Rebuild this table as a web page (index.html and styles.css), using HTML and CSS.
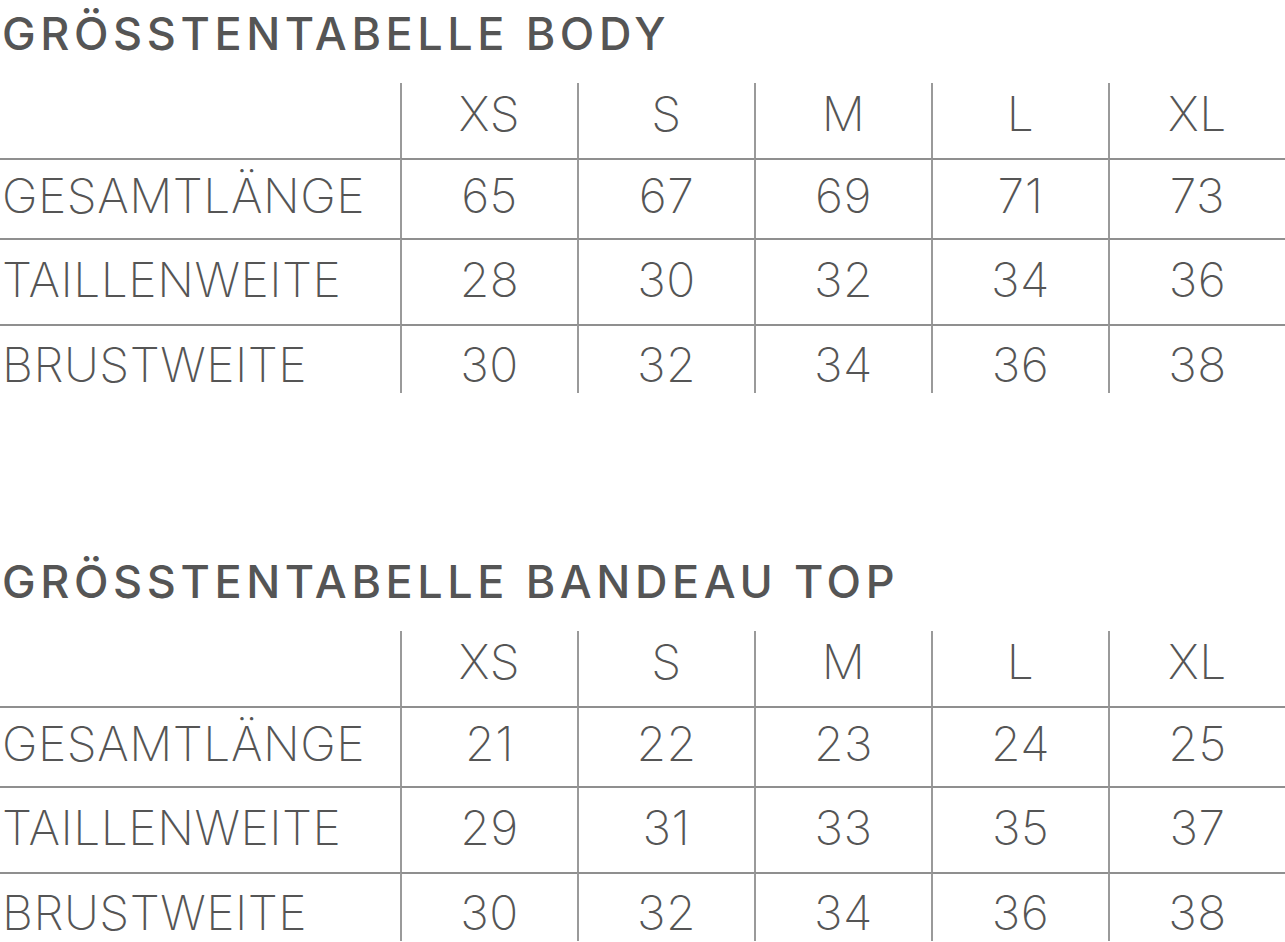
FILE: index.html
```html
<!DOCTYPE html>
<html lang="de">
<head>
<meta charset="utf-8">
<title>Größentabelle</title>
<link rel="stylesheet" href="styles.css">
</head>
<body>
<main class="page">
  <section class="block">
    <h2 class="title">GRÖSSTENTABELLE BODY</h2>
    <div class="sizes">
      <div class="cell head label"></div>
      <div class="cell head val">XS</div>
      <div class="cell head val">S</div>
      <div class="cell head val">M</div>
      <div class="cell head val">L</div>
      <div class="cell head val">XL</div>

      <div class="cell r1 label">GESAMTLÄNGE</div>
      <div class="cell r1 val">65</div>
      <div class="cell r1 val">67</div>
      <div class="cell r1 val">69</div>
      <div class="cell r1 val">71</div>
      <div class="cell r1 val">73</div>

      <div class="cell r2 label">TAILLENWEITE</div>
      <div class="cell r2 val">28</div>
      <div class="cell r2 val">30</div>
      <div class="cell r2 val">32</div>
      <div class="cell r2 val">34</div>
      <div class="cell r2 val">36</div>

      <div class="cell r3 label">BRUSTWEITE</div>
      <div class="cell r3 val">30</div>
      <div class="cell r3 val">32</div>
      <div class="cell r3 val">34</div>
      <div class="cell r3 val">36</div>
      <div class="cell r3 val">38</div>
    </div>
  </section>

  <section class="block second">
    <h2 class="title">GRÖSSTENTABELLE BANDEAU TOP</h2>
    <div class="sizes">
      <div class="cell head label"></div>
      <div class="cell head val">XS</div>
      <div class="cell head val">S</div>
      <div class="cell head val">M</div>
      <div class="cell head val">L</div>
      <div class="cell head val">XL</div>

      <div class="cell r1 label">GESAMTLÄNGE</div>
      <div class="cell r1 val">21</div>
      <div class="cell r1 val">22</div>
      <div class="cell r1 val">23</div>
      <div class="cell r1 val">24</div>
      <div class="cell r1 val">25</div>

      <div class="cell r2 label">TAILLENWEITE</div>
      <div class="cell r2 val">29</div>
      <div class="cell r2 val">31</div>
      <div class="cell r2 val">33</div>
      <div class="cell r2 val">35</div>
      <div class="cell r2 val">37</div>

      <div class="cell r3 label">BRUSTWEITE</div>
      <div class="cell r3 val">30</div>
      <div class="cell r3 val">32</div>
      <div class="cell r3 val">34</div>
      <div class="cell r3 val">36</div>
      <div class="cell r3 val">38</div>
    </div>
  </section>
</main>
</body>
</html>
```

FILE: styles.css
```css
html, body {
  margin: 0;
  padding: 0;
  background: #ffffff;
}

body {
  font-family: "Inter", "Liberation Sans", sans-serif;
  color: #555555;
  overflow: hidden;
}

.page {
  width: 1285px;
}

.title {
  margin: 0;
  padding: 11px 0 0 2px;
  height: 83px;
  box-sizing: border-box;
  font-size: 45px;
  line-height: 45px;
  font-weight: 500;
  letter-spacing: 4.6px;
  color: #555555;
  white-space: nowrap;
}

.second {
  margin-top: 155px;
}

.sizes {
  display: grid;
  grid-template-columns: 400px repeat(5, 1fr);
  grid-template-rows: 75px 80px 86px 69px;
}

.cell {
  box-sizing: border-box;
  font-size: 48px;
  line-height: 48px;
  font-weight: 200;
  letter-spacing: 0.5px;
  white-space: nowrap;
}

.label {
  padding-left: 2px;
}

.val {
  text-align: center;
  border-left: 2px solid #9a9a9a;
}

.r1, .r2, .r3 {
  border-top: 2px solid #8f8f8f;
}

.head { padding-top: 7px; }
.r1 { padding-top: 12px; }
.r2 { padding-top: 16px; }
.r3 { padding-top: 15px; }
```
